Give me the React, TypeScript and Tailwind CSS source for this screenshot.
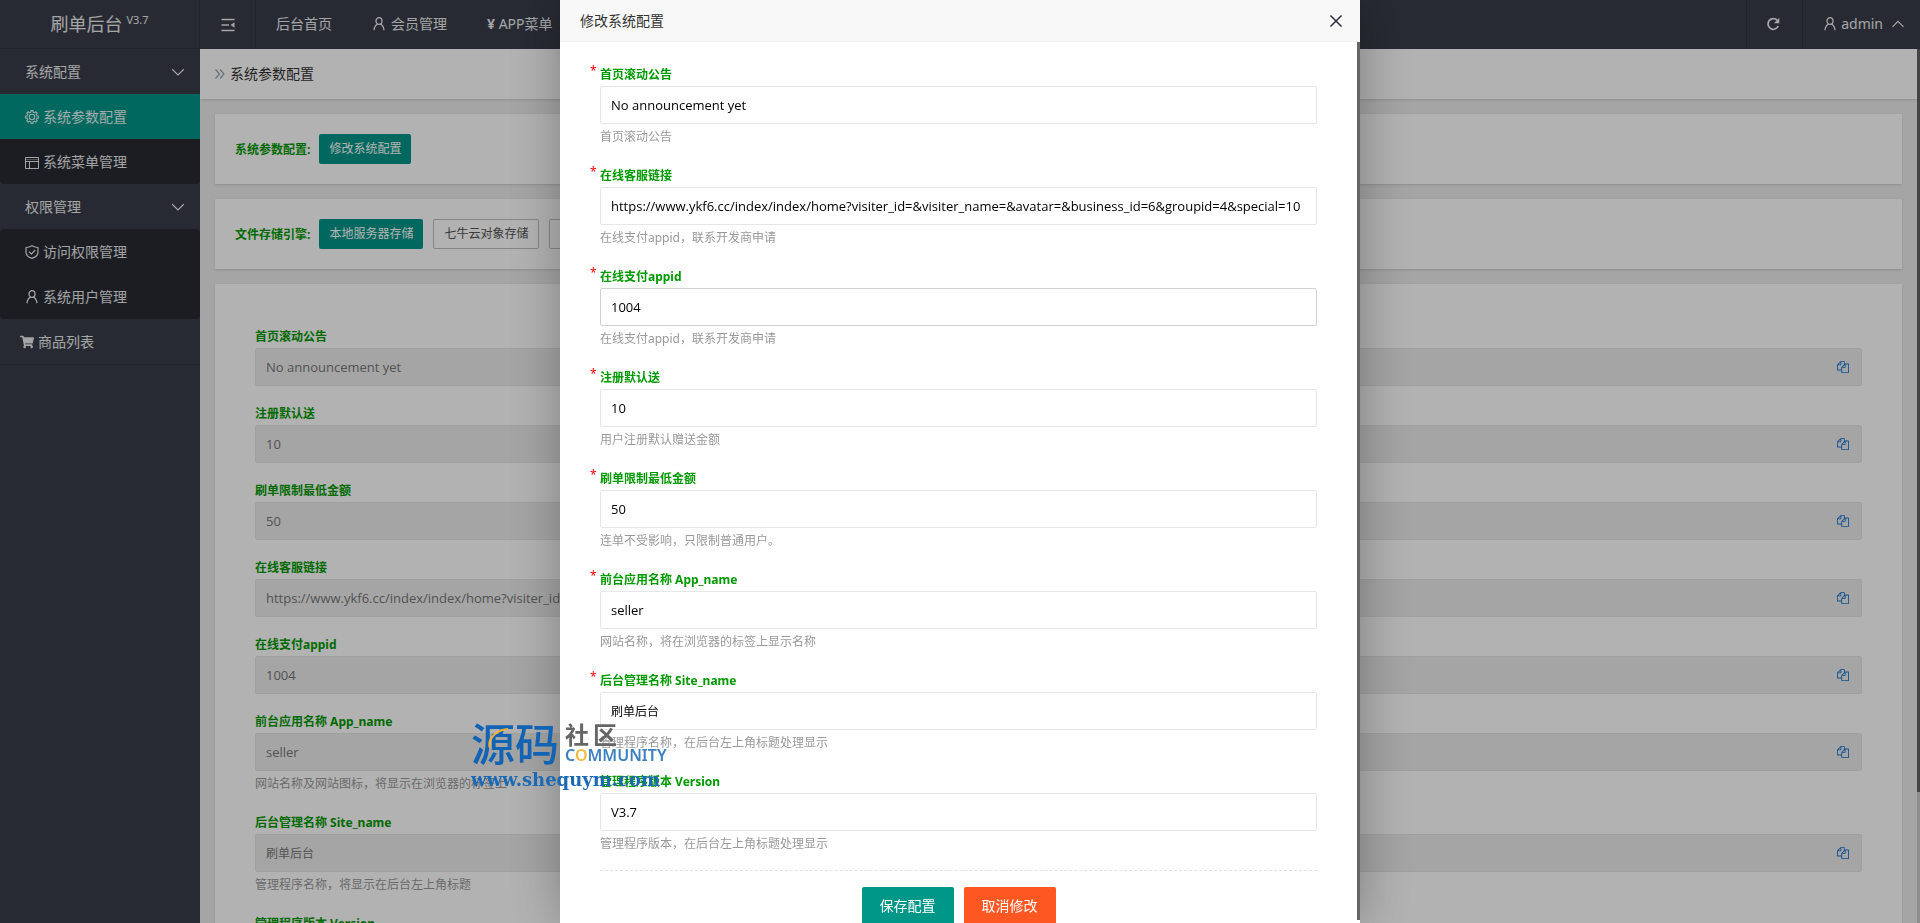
import { useState } from 'react';
import { FaShoppingCart } from 'react-icons/fa';

type Field = {
  name: string;
  label: string;
  value: string;
  help?: string;
  required?: boolean;
  active?: boolean;
};

const summary: Field[] = [
  { name: 'notice', label: '首页滚动公告', value: 'No announcement yet' },
  { name: 'reg_gift', label: '注册默认送', value: '10' },
  { name: 'min_amount', label: '刷单限制最低金额', value: '50' },
  { name: 'service_url', label: '在线客服链接', value: 'https://www.ykf6.cc/index/index/home?visiter_id=&visiter_name=&avatar=&business_id=6&groupid=4&special=10' },
  { name: 'pay_appid', label: '在线支付appid', value: '1004' },
  { name: 'app_name', label: '前台应用名称 App_name', value: 'seller', help: '网站名称及网站图标，将显示在浏览器的标签上' },
  { name: 'site_name', label: '后台管理名称 Site_name', value: '刷单后台', help: '管理程序名称，将显示在后台左上角标题' },
  { name: 'version', label: '管理程序版本 Version', value: 'V3.7', help: '管理程序版本，将显示在后台左上角标题' },
];

const formFields: Field[] = [
  { name: 'notice', label: '首页滚动公告', value: 'No announcement yet', help: '首页滚动公告', required: true },
  { name: 'service_url', label: '在线客服链接', value: 'https://www.ykf6.cc/index/index/home?visiter_id=&visiter_name=&avatar=&business_id=6&groupid=4&special=10', help: '在线支付appid，联系开发商申请', required: true },
  { name: 'pay_appid', label: '在线支付appid', value: '1004', help: '在线支付appid，联系开发商申请', required: true, active: true },
  { name: 'reg_gift', label: '注册默认送', value: '10', help: '用户注册默认赠送金额', required: true },
  { name: 'min_amount', label: '刷单限制最低金额', value: '50', help: '连单不受影响，只限制普通用户。', required: true },
  { name: 'app_name', label: '前台应用名称 App_name', value: 'seller', help: '网站名称，将在浏览器的标签上显示名称', required: true },
  { name: 'site_name', label: '后台管理名称 Site_name', value: '刷单后台', help: '管理程序名称，在后台左上角标题处理显示', required: true },
  { name: 'version', label: '管理程序版本 Version', value: 'V3.7', help: '管理程序版本，在后台左上角标题处理显示' },
];

// latin values read smaller than chinese ones at the same size
const valueSize = (value: string) => (/^[\x20-\x7e]+$/.test(value) ? 'text-[13px]' : 'text-xs');

function UserIcon() {
  return (
    <svg viewBox="0 0 14 14" className="w-3.5 h-3.5" fill="none" stroke="currentColor" strokeWidth="1.3">
      <ellipse cx="7" cy="4" rx="3" ry="3.4" />
      <path d="M5.6 7.2C3.6 8.2 2.3 10.2 2 13.2M8.4 7.2c2 1 3.300 3 3.600 6" />
    </svg>
  );
}

function GearIcon() {
  return (
    <svg viewBox="0 0 14 14" className="w-3.5 h-3.5" fill="none" stroke="currentColor" strokeWidth="1.1" strokeLinejoin="round">
      <path d="M5.800 2.200 6.100.6h1.800l.3 1.600 1.300.5 1.400-.9 1.300 1.300-.9 1.400.5 1.300 1.600.3v1.800l-1.600.3-.5 1.300.9 1.400-1.300 1.300-1.400-.9-1.300.5-.3 1.600H6.100l-.3-1.600-1.300-.5-1.400.9-1.300-1.300.9-1.400-.5-1.300-1.600-.3V6.100l1.600-.3.5-1.300-.9-1.400 1.300-1.300 1.400.9z" />
      <circle cx="7" cy="7" r="2.700" />
    </svg>
  );
}

function WindowIcon() {
  return (
    <svg viewBox="0 0 14 14" className="w-3.5 h-3.5" fill="none" stroke="currentColor">
      <path d="M.5 2.500h13v11H.5zM.5 6.500h13M4.500 6.500v7" />
      <path d="M1 4.500h12" opacity=".4" />
    </svg>
  );
}

function ShieldIcon() {
  return (
    <svg viewBox="0 0 14 14" className="w-3.5 h-3.5" fill="none" stroke="currentColor" strokeWidth="1.200" strokeLinejoin="round">
      <path d="M7 .7c1.800 1.100 3.700 1.700 6 1.800v4.700c0 2.900-2.300 5-6 6.100-3.700-1.100-6-3.200-6-6.100V2.500C3.300 2.400 5.200 1.800 7 .7z" />
      <path d="m4 6.600 2.400 2.500L10.200 5" />
    </svg>
  );
}

function CopyIcon() {
  return (
    <svg viewBox="0 0 1792 1792" className="w-3 h-3" fill="currentColor">
      <path d="M1696 384q40 0 68 28t28 68v1216q0 40-28 68t-68 28h-960q-40 0-68-28t-28-68v-288h-544q-40 0-68-28t-28-68v-672q0-40 20-88t48-76l408-408q28-28 76-48t88-20h416q40 0 68 28t28 68v328q68-40 128-40h416zm-544 213l-299 299h299v-299zm-640-384l-299 299h299v-299zm196 647l316-316v-416h-384v416q0 40-28 68t-68 28h-416v640h512v-256q0-40 20-88t48-76zm956 804v-1152h-384v416q0 40-28 68t-68 28h-416v640h896z" />
    </svg>
  );
}

function Chevron({ up }: { up?: boolean }) {
  return (
    <svg viewBox="0 0 14 14" className="w-3.5 h-3.5" fill="none" stroke="currentColor" strokeWidth="1.200">
      <path d={up ? 'M1.500 9.800 7 4.300l5.500 5.500' : 'M1.200 4.300 7 10l5.800-5.700'} />
    </svg>
  );
}

function Header() {
  return (
    <header className="flex h-[49px] shrink-0 bg-[#393d49] text-sm text-white/90">
      <a href="#" className="flex w-[200px] justify-center border-r border-b border-[#30333d] pt-1.5 text-lg leading-9">
        刷单后台<sup className="ml-1 top-0 text-[11px] leading-7">V3.7</sup>
      </a>
      <button className="flex w-14 items-center justify-center border-r border-[#30333d]" aria-label="折叠菜单">
        <svg viewBox="0 0 14 14" className="w-3.5 h-3.5" fill="none" stroke="currentColor" strokeWidth="1.500">
          <path d="M.5 1.500h13M.5 7H8M.5 12.500h13" />
          <path d="M13.500 4.300v5.400L9.500 7z" fill="currentColor" stroke="none" />
        </svg>
      </button>
      <nav className="flex flex-1 items-center gap-10 px-5 pb-0.5">
        <a href="#">后台首页</a>
        <a href="#" className="flex items-center gap-[5px]"><UserIcon />会员管理</a>
        <a href="#"><b>¥</b> APP菜单</a>
      </nav>
      <button className="flex w-14 items-center justify-center border-l border-[#30333d] pr-1 pb-0.5" aria-label="刷新">
        <svg viewBox="0 0 14 14" className="w-3.5 h-3.5" fill="none" stroke="currentColor" strokeWidth="1.800">
          <path d="M11.200 3.400A5.300 5.300 0 1 0 12.200 9" />
          <path d="M13.300.8v5.400H7.900z" fill="currentColor" stroke="none" />
        </svg>
      </button>
      <button className="flex items-center gap-1 border-l border-[#30333d] pl-5 pr-[15px] pb-0.5">
        <UserIcon />
        <span className="mr-1">admin</span>
        <Chevron up />
      </button>
    </header>
  );
}

function Sidebar() {
  const group = 'flex h-[45px] w-full items-center justify-between pl-[25px] pr-[15px]';
  const item = 'flex h-[45px] items-center gap-1 pl-[25px]';
  return (
    <aside className="w-[200px] shrink-0 bg-[#393d49] text-sm text-white/90">
      <button className={group}>系统配置<Chevron /></button>
      <div className="rounded-b-sm bg-black/30">
        <a href="#" className={`${item} bg-[#009688]`}><GearIcon />系统参数配置</a>
        <a href="#" className={item}><WindowIcon />系统菜单管理</a>
      </div>
      <button className={group}>权限管理<Chevron /></button>
      <div className="rounded-sm bg-black/30">
        <a href="#" className={item}><ShieldIcon />访问权限管理</a>
        <a href="#" className={item}><UserIcon />系统用户管理</a>
      </div>
      <a href="#" className="flex h-[46px] items-center gap-1 border-b border-[#30333d] pl-5">
        <FaShoppingCart className="w-3.5 h-3.5" />商品列表
      </a>
    </aside>
  );
}

function Summary() {
  return (
    <main className="min-w-0 flex-1 overflow-hidden bg-[#ececec] text-xs">
      <div className="flex h-[50px] items-center gap-1 bg-white pl-3.5 text-sm text-[#333] shadow">
        <svg viewBox="0 0 12 12" className="w-3 h-3 text-gray-400" fill="none" stroke="currentColor" strokeWidth="1.200">
          <path d="m1.500 1.500 4 4.500-4 4.500M6 1.500 10 6l-4 4.500" />
        </svg>
        系统参数配置
      </div>
      <div className="flex flex-col gap-[15px] p-[15px]">
        <section className="flex items-center bg-white p-5 shadow">
          <b className="mr-[9px] pt-0.5 text-[#090]">系统参数配置:</b>
          <button className="h-[30px] rounded-xs bg-[#009688] px-2.5 text-white">修改系统配置</button>
        </section>
        <section className="flex items-center bg-white p-5 shadow">
          <b className="mr-[9px] pt-0.5 text-[#090]">文件存储引擎:</b>
          <div className="flex gap-2.5">
            <button className="h-[30px] rounded-xs bg-[#009688] px-2.5 text-white">本地服务器存储</button>
            <button className="h-[30px] rounded-xs border border-[#c0c0c0] px-2.5 text-[#555]">七牛云对象存储</button>
            <button className="h-[30px] rounded-xs border border-[#c0c0c0] px-2.5 text-[#555]">阿里云OSS存储</button>
          </div>
        </section>
        <section className="flex flex-col gap-[15px] bg-white p-10 shadow">
          {summary.map((f) => (
            <div key={f.name}>
              <label htmlFor={`view-${f.name}`} className="block pt-0.5 font-bold leading-[22px] text-[#090]">{f.label}</label>
              <div className="flex h-[38px] items-center rounded-xs border border-[#e6e6e6] bg-[#ececec] pr-3">
                <input id={`view-${f.name}`} readOnly value={f.value} className={`h-full min-w-0 flex-1 px-2.5 font-['Open_Sans','Noto_Sans_CJK_SC',sans-serif] text-[#777] outline-none ${valueSize(f.value)}`} />
                <button className="text-[#1673d1]" aria-label="复制"><CopyIcon /></button>
              </div>
              {f.help && <p className="pt-0.5 leading-[22px] text-[#999]">{f.help}</p>}
            </div>
          ))}
        </section>
      </div>
    </main>
  );
}

function ConfigModal({ onClose }: { onClose: () => void }) {
  return (
    <div className="fixed inset-0 flex justify-center bg-black/30">
      <div role="dialog" aria-label="修改系统配置" className="flex w-[800px] flex-col bg-white shadow-[1px_1px_50px_rgba(0,0,0,0.3)]">
        <div className="flex h-[42px] shrink-0 items-center justify-between border-b border-[#eee] bg-[#f8f8f8] pl-5 pr-[17px] text-sm text-[#333]">
          <h2>修改系统配置</h2>
          <button onClick={onClose} aria-label="关闭">
            <svg viewBox="0 0 14 14" className="w-3.5 h-3.5 text-[#2e2d3c]" fill="none" stroke="currentColor" strokeWidth="1.500">
              <path d="m1.500 1.500 11 11M12.500 1.500l-11 11" />
            </svg>
          </button>
        </div>
        <div className="flex min-h-0 flex-1">
          <form onSubmit={(e) => e.preventDefault()} className="flex-1 overflow-hidden py-5 pl-10 pr-10 text-xs">
            {formFields.map((f) => (
              <div key={f.name} className="mb-[15px]">
                <label htmlFor={`edit-${f.name}`} className="relative block pt-0.5 font-bold leading-[22px] text-[#090]">
                  {f.required && <span className="absolute -left-2.5 -top-0.5 font-normal text-[#f00]">*</span>}
                  {f.label}
                </label>
                <input
                  id={`edit-${f.name}`}
                  name={f.name}
                  defaultValue={f.value}
                  className={`h-[38px] w-full rounded-xs border px-2.5 font-['Open_Sans','Noto_Sans_CJK_SC',sans-serif] text-black outline-none ${valueSize(f.value)} ${f.active ? 'border-[#d2d2d2]' : 'border-[#e6e6e6]'}`}
                />
                <p className="pt-0.5 leading-[22px] text-[#999]">{f.help}</p>
              </div>
            ))}
            <hr className="mb-4 border-dashed border-[#e2e2e2]" />
            <div className="flex justify-center gap-2.5 text-sm text-white">
              <button type="submit" className="h-[38px] rounded-xs bg-[#009688] px-[18px]">保存配置</button>
              <button type="button" onClick={onClose} className="h-[38px] rounded-xs bg-[#ff5722] px-[18px]">取消修改</button>
            </div>
          </form>
          {/* scroll thumb */}
          <div className="mb-[3px] w-[3px] bg-[#666]" />
        </div>
      </div>
    </div>
  );
}

function Watermark() {
  return (
    <div className="pointer-events-none absolute left-[471px] top-[722px] w-[200px]">
      <div className="flex gap-1.5 font-bold">
        <span className="relative text-[44px] font-medium leading-[44px] text-[#1263b4]">
          源码
          <svg viewBox="0 0 24 24" className="absolute left-4 top-1 w-6 h-6" fill="none" stroke="#f5b335" strokeWidth="2">
            <path d="M3 22C0 14 8 4 21 3" />
          </svg>
        </span>
        <span className="flex flex-col">
          <span className="flex gap-1 text-2xl leading-[26px] text-[#666]"><i className="not-italic">社</i><i className="not-italic">区</i></span>
          <span className="text-base leading-[14px] font-semibold text-[#3c80c0]">C<span className="text-[#f5b942]">O</span>MMUNITY</span>
        </span>
      </div>
      <p className="font-['DejaVu_Serif',serif] text-lg font-bold leading-7 text-[#1c69b4]">www.shequym.com</p>
    </div>
  );
}

export default function App() {
  const [open, setOpen] = useState(true);

  return (
    <div className="relative flex h-screen flex-col overflow-hidden bg-[#393d49] font-['Noto_Sans','Noto_Sans_CJK_SC',sans-serif]">
      <Header />
      <div className="flex min-h-0 flex-1">
        <Sidebar />
        <Summary />
        <div className="w-[3px] bg-[#ccc]">
          <div className="h-[85%] bg-[#626262]" />
        </div>
      </div>
      {open && <ConfigModal onClose={() => setOpen(false)} />}
      <Watermark />
    </div>
  );
}
